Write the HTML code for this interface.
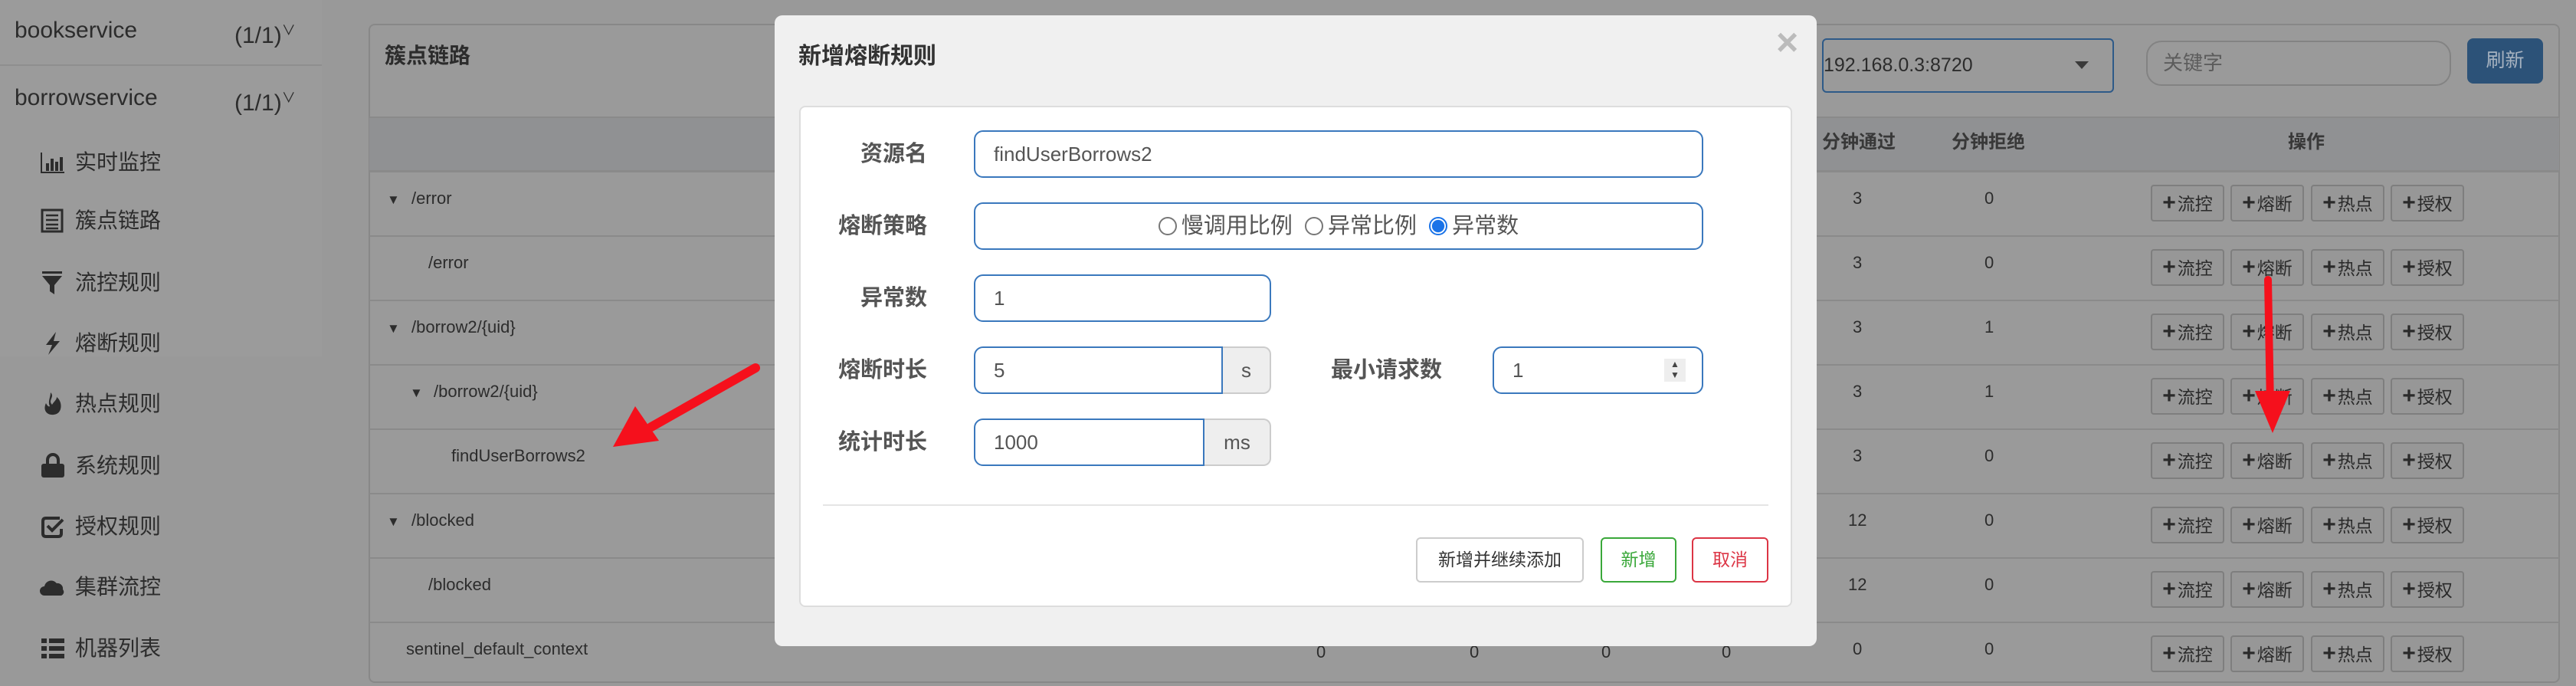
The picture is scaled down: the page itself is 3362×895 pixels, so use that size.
<!DOCTYPE html>
<html><head><meta charset="utf-8"><style>
*{box-sizing:border-box;margin:0;padding:0}
body{width:3362px;height:858px;overflow:hidden;position:relative;background:#999;font-family:"Liberation Sans","Noto Sans CJK SC",sans-serif;color:#2c2c2c}
.a{position:absolute;white-space:nowrap}
.side{left:0;top:0;width:420px;height:465px;background:#9b9b9b}
.mi{font-size:28px;line-height:34px}
.ic{position:absolute;left:52px;width:34px;height:34px}
.row{position:absolute;left:482px;width:2858px;height:84px;border-top:2px solid #8a8a8a}
.t{font-size:22px;line-height:30px}
.tri{font-size:17px;position:absolute;line-height:30px}
.btn{position:absolute;height:48px;width:96px;border:2px solid #7e7e7e;border-radius:4px;background:#979797;font-size:23px;line-height:44px;text-align:center;color:#2a2a2a}
.btn b{font-size:30px;margin-right:2px;font-weight:900}
.lab{font-size:29px;font-weight:bold;color:#555;line-height:40px;text-align:right}
.inp{position:absolute;border:2px solid #3a78bd;border-radius:12px;background:#fff;font-size:26px;color:#555;line-height:58px;padding-left:24px}
.add{position:absolute;border:2px solid #ccc;border-left:none;border-radius:0 10px 10px 0;background:#eee;font-size:26px;color:#555;text-align:center;line-height:58px}
.rd{display:inline-block;width:24px;height:24px;border:2px solid #777;border-radius:50%;vertical-align:-3px;margin-right:6px}
</style></head><body>
<div class="a side"></div>
<div class="a" style="left:0;top:84px;width:420px;height:2px;background:#8e8e8e"></div>
<div class="a" style="left:19px;top:22px;font-size:30px;line-height:36px">bookservice</div>
<div class="a" style="left:306px;top:22px;font-size:30px;line-height:36px">(1/1)<span style="font-size:18px;vertical-align:10px">&#8744;</span></div>
<div class="a" style="left:19px;top:110px;font-size:30px;line-height:36px">borrowservice</div>
<div class="a" style="left:306px;top:110px;font-size:30px;line-height:36px">(1/1)<span style="font-size:18px;vertical-align:10px">&#8744;</span></div>

<svg class="ic" style="top:195px" viewBox="0 0 34 34"><path d="M2 4V30H32" stroke="#2c2c2c" stroke-width="2" fill="none"/><rect x="8" y="18" width="4" height="10" fill="#2c2c2c"/><rect x="14" y="12" width="4" height="16" fill="#2c2c2c"/><rect x="20" y="16" width="4" height="12" fill="#2c2c2c"/><rect x="26" y="10" width="4" height="18" fill="#2c2c2c"/></svg>
<div class="a mi" style="left:98px;top:195px">实时监控</div>
<svg class="ic" style="top:271px" viewBox="0 0 34 34"><rect x="3" y="3" width="26" height="28" fill="none" stroke="#2c2c2c" stroke-width="3"/><path d="M8 10H24M8 16H24M8 22H24M8 27H24" stroke="#2c2c2c" stroke-width="2.5"/></svg>
<div class="a mi" style="left:98px;top:271px">簇点链路</div>
<svg class="ic" style="top:352px" viewBox="0 0 34 34"><rect x="3" y="2" width="26" height="3" fill="#2c2c2c"/><path d="M3 8H29L19 20V32L13 28V20Z" fill="#2c2c2c"/></svg>
<div class="a mi" style="left:98px;top:352px">流控规则</div>
<svg class="ic" style="top:431px" viewBox="0 0 34 34"><path d="M21 2L8 19H16L11 32L26 14H18Z" fill="#2c2c2c"/></svg>
<div class="a mi" style="left:98px;top:431px">熔断规则</div>
<svg class="ic" style="top:510px" viewBox="0 0 34 34"><path d="M14 2C20 8 10 12 16 18C18 14 22 12 22 8C30 14 30 30 18 31C8 32 4 24 8 16C10 20 12 21 13 20C10 14 14 8 14 2Z" fill="#2c2c2c"/></svg>
<div class="a mi" style="left:98px;top:510px">热点规则</div>
<svg class="ic" style="top:591px" viewBox="0 0 34 34"><path d="M10 14V9A7 7 0 0 1 24 9V14" stroke="#2c2c2c" stroke-width="4" fill="none"/><rect x="2" y="14" width="30" height="18" rx="3" fill="#2c2c2c"/></svg>
<div class="a mi" style="left:98px;top:591px">系统规则</div>
<svg class="ic" style="top:670px" viewBox="0 0 34 34"><path d="M26 6H8Q4 6 4 10V26Q4 30 8 30H24Q28 30 28 26V20" stroke="#2c2c2c" stroke-width="4" fill="none"/><path d="M10 16L16 22L30 8" stroke="#2c2c2c" stroke-width="4" fill="none"/></svg>
<div class="a mi" style="left:98px;top:670px">授权规则</div>
<svg class="ic" style="top:749px" viewBox="0 0 34 34"><path d="M6 28A6 6 0 0 1 6 16A9 9 0 0 1 22 12A7 7 0 0 1 30 20A5 5 0 0 1 28 28Z" fill="#2c2c2c"/></svg>
<div class="a mi" style="left:98px;top:749px">集群流控</div>
<svg class="ic" style="top:829px" viewBox="0 0 34 34"><rect x="2" y="4" width="7" height="6" fill="#2c2c2c"/><rect x="12" y="4" width="20" height="6" fill="#2c2c2c"/><rect x="2" y="14" width="7" height="6" fill="#2c2c2c"/><rect x="12" y="14" width="20" height="6" fill="#2c2c2c"/><rect x="2" y="24" width="7" height="6" fill="#2c2c2c"/><rect x="12" y="24" width="20" height="6" fill="#2c2c2c"/></svg>
<div class="a mi" style="left:98px;top:829px">机器列表</div>

<div class="a" style="left:481px;top:31px;width:2860px;height:860px;border:2px solid #888;border-radius:8px;background:#9a9a9a"></div>
<div class="a" style="left:502px;top:56px;font-size:28px;font-weight:bold;line-height:34px">簇点链路</div>
<div class="a" style="left:482px;top:152px;width:2858px;height:72px;background:#909193;border-top:2px solid #8a8a8a;border-bottom:2px solid #8a8a8a"></div>
<div class="a" style="left:2378px;top:50px;width:381px;height:71px;border:2px solid #2e5a88;border-radius:6px;font-size:25px;line-height:67px">192.168.0.3:8720</div>
<div class="a" style="left:2708px;top:80px;width:0;height:0;border-left:9px solid transparent;border-right:9px solid transparent;border-top:10px solid #3a3a3a"></div>
<div class="a" style="left:2801px;top:53px;width:398px;height:59px;border:2px solid #838383;border-radius:20px;font-size:26px;line-height:55px;padding-left:20px;color:#5c5c5c">关键字</div>
<div class="a" style="left:3220px;top:50px;width:99px;height:59px;background:#2c5278;border-radius:8px;font-size:25px;line-height:59px;text-align:center;color:#a6b2c0">刷新</div>
<div class="a t" style="left:2378px;top:171px;font-size:24px;font-weight:bold;color:#383838">分钟通过</div>
<div class="a t" style="left:2547px;top:171px;font-size:24px;font-weight:bold;color:#383838">分钟拒绝</div>
<div class="a t" style="left:2986px;top:171px;font-size:24px;font-weight:bold;color:#383838">操作</div>

<div class="row" style="top:223px"></div><div class="row" style="top:307px"></div><div class="row" style="top:391px"></div><div class="row" style="top:475px"></div><div class="row" style="top:559px"></div><div class="row" style="top:643px"></div><div class="row" style="top:727px"></div><div class="row" style="top:811px"></div>

<div class="tri" style="left:505px;top:246px">&#9660;</div><div class="a t" style="left:537px;top:244px">/error</div>
<div class="a t" style="left:559px;top:328px">/error</div>
<div class="tri" style="left:505px;top:414px">&#9660;</div><div class="a t" style="left:537px;top:412px">/borrow2/{uid}</div>
<div class="tri" style="left:535px;top:498px">&#9660;</div><div class="a t" style="left:566px;top:496px">/borrow2/{uid}</div>
<div class="a t" style="left:589px;top:580px">findUserBorrows2</div>
<div class="tri" style="left:505px;top:666px">&#9660;</div><div class="a t" style="left:537px;top:664px">/blocked</div>
<div class="a t" style="left:559px;top:748px">/blocked</div>
<div class="a t" style="left:530px;top:832px">sentinel_default_context</div>
<div class="a t" style="left:1718px;top:836px">0</div><div class="a t" style="left:1918px;top:836px">0</div><div class="a t" style="left:2090px;top:836px">0</div><div class="a t" style="left:2247px;top:836px">0</div>

<div class="a t" style="left:2418px;top:244px">3</div><div class="a t" style="left:2590px;top:244px">0</div>
<div class="a t" style="left:2418px;top:328px">3</div><div class="a t" style="left:2590px;top:328px">0</div>
<div class="a t" style="left:2418px;top:412px">3</div><div class="a t" style="left:2590px;top:412px">1</div>
<div class="a t" style="left:2418px;top:496px">3</div><div class="a t" style="left:2590px;top:496px">1</div>
<div class="a t" style="left:2418px;top:580px">3</div><div class="a t" style="left:2590px;top:580px">0</div>
<div class="a t" style="left:2412px;top:664px">12</div><div class="a t" style="left:2590px;top:664px">0</div>
<div class="a t" style="left:2412px;top:748px">12</div><div class="a t" style="left:2590px;top:748px">0</div>
<div class="a t" style="left:2418px;top:832px">0</div><div class="a t" style="left:2590px;top:832px">0</div>

<div id="btns"></div>
<script>
var h='';for(var i=0;i<8;i++){var y=241+84*i;var xs=[2807,2911,3016,3120],ls=['流控','熔断','热点','授权'];for(var j=0;j<4;j++){h+='<div class="btn" style="left:'+xs[j]+'px;top:'+y+'px"><b>+</b>'+ls[j]+'</div>';}}
document.getElementById('btns').innerHTML=h;
</script>

<div class="a" style="left:1011px;top:20px;width:1360px;height:823px;background:#f0f0f0;border-radius:10px"></div>
<div class="a" style="left:1042px;top:56px;font-size:30px;font-weight:bold;color:#333;line-height:36px">新增熔断规则</div>
<div class="a" style="left:2318px;top:28px;font-size:50px;color:#bbb;line-height:54px;font-weight:bold">&#215;</div>
<div class="a" style="left:1043px;top:138px;width:1296px;height:654px;background:#fff;border:2px solid #ddd;border-radius:8px"></div>

<div class="a lab" style="left:1100px;top:181px;width:110px">资源名</div>
<div class="inp" style="left:1271px;top:170px;width:952px;height:62px">findUserBorrows2</div>
<div class="a lab" style="left:1080px;top:275px;width:130px">熔断策略</div>
<div class="inp" style="left:1271px;top:264px;width:952px;height:62px;padding:0;text-align:center;font-size:29px"><span class="rd"></span>慢调用比例&nbsp; <span class="rd"></span>异常比例&nbsp; <span class="rd" style="border-color:#1a73e8;background:radial-gradient(circle,#1a73e8 55%,#fff 60%)"></span>异常数</div>
<div class="a lab" style="left:1100px;top:369px;width:110px">异常数</div>
<div class="inp" style="left:1271px;top:358px;width:388px;height:62px">1</div>
<div class="a lab" style="left:1080px;top:463px;width:130px">熔断时长</div>
<div class="inp" style="left:1271px;top:452px;width:325px;height:62px;border-radius:12px 0 0 12px">5</div>
<div class="add" style="left:1596px;top:452px;width:63px;height:62px">s</div>
<div class="a lab" style="left:1737px;top:463px;width:153px;text-align:left">最小请求数</div>
<div class="inp" style="left:1948px;top:452px;width:275px;height:62px">1</div>
<div class="a" style="left:2172px;top:468px;width:28px;height:30px;background:#eee;font-size:12px;line-height:14px;text-align:center;color:#444">&#9650;<br>&#9660;</div>
<div class="a lab" style="left:1080px;top:557px;width:130px">统计时长</div>
<div class="inp" style="left:1271px;top:546px;width:301px;height:62px;border-radius:12px 0 0 12px">1000</div>
<div class="add" style="left:1572px;top:546px;width:87px;height:62px">ms</div>
<div class="a" style="left:1074px;top:658px;width:1234px;height:2px;background:#e5e5e5"></div>
<div class="a" style="left:1848px;top:701px;width:219px;height:59px;border:2px solid #ccc;border-radius:6px;font-size:23px;line-height:55px;text-align:center;color:#333;background:#fff">新增并继续添加</div>
<div class="a" style="left:2089px;top:701px;width:99px;height:59px;border:2px solid #3aa83a;border-radius:6px;font-size:23px;line-height:55px;text-align:center;color:#3aa83a;background:#fff">新增</div>
<div class="a" style="left:2208px;top:701px;width:100px;height:59px;border:2px solid #dc3545;border-radius:6px;font-size:23px;line-height:55px;text-align:center;color:#dc3545;background:#fff">取消</div>

<svg class="a" style="left:0;top:0" width="3362" height="858">
<line x1="986" y1="480" x2="850" y2="557" stroke="#f5101c" stroke-width="12" stroke-linecap="round"/>
<path d="M800 583L829 530L860 575Z" fill="#f5101c"/>
<line x1="2960" y1="365" x2="2963" y2="530" stroke="#f5101c" stroke-width="10" stroke-linecap="round"/>
<path d="M2966 565L2943 510L2989 510Z" fill="#f5101c"/>
</svg>
</body></html>
